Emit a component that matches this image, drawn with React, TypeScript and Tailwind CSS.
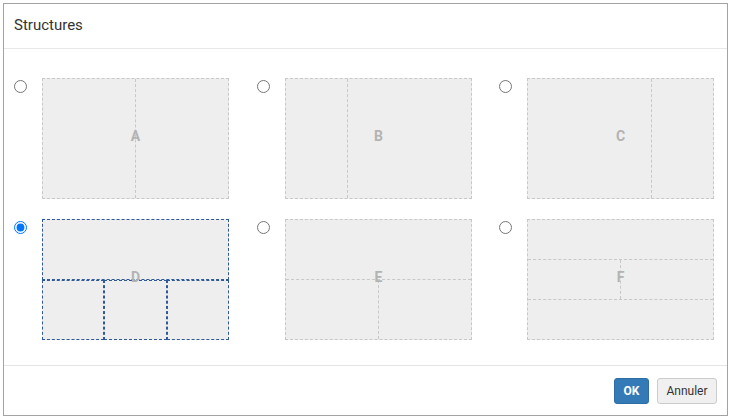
import React from "react";

const cell = "border-[#c8c8c8] border-dashed";
const sel = "border border-dashed border-[#2f5898]";

function Letter({ children }: { children: string }) {
  return (
    <div className="absolute inset-0 flex items-center justify-center pb-[4px] pointer-events-none">
      <span className="text-[14px] font-bold text-[#b3b3b3]">{children}</span>
    </div>
  );
}

function StructA() {
  return (
    <div className={`relative flex w-full h-full border ${cell}`}>
      <div className={`w-1/2 border-r ${cell}`} />
      <div className="flex-1" />
      <Letter>A</Letter>
    </div>
  );
}

function StructB() {
  return (
    <div className={`relative flex w-full h-full border ${cell}`}>
      <div className={`w-[62px] border-r ${cell}`} />
      <div className="flex-1" />
      <Letter>B</Letter>
    </div>
  );
}

function StructC() {
  return (
    <div className={`relative flex w-full h-full border ${cell}`}>
      <div className={`w-[124px] border-r ${cell}`} />
      <div className="flex-1" />
      <Letter>C</Letter>
    </div>
  );
}

function StructD() {
  return (
    <div className="relative flex flex-col w-full h-full">
      <div className={`h-[61px] ${sel}`} />
      <div className="flex flex-1">
        <div className={`w-[62px] ${sel}`} />
        <div className={`w-[63px] ${sel}`} />
        <div className={`flex-1 ${sel}`} />
      </div>
      <Letter>D</Letter>
    </div>
  );
}

function StructE() {
  return (
    <div className={`relative flex flex-col w-full h-full border ${cell}`}>
      <div className={`h-[60px] border-b ${cell}`} />
      <div className="flex flex-1">
        <div className={`w-1/2 border-r ${cell}`} />
        <div className="flex-1" />
      </div>
      <Letter>E</Letter>
    </div>
  );
}

function StructF() {
  return (
    <div className={`relative flex flex-col w-full h-full border ${cell}`}>
      <div className={`h-[40px] border-b ${cell}`} />
      <div className={`flex h-[40px] border-b ${cell}`}>
        <div className={`w-1/2 border-r ${cell}`} />
        <div className="flex-1" />
      </div>
      <div className="flex-1" />
      <Letter>F</Letter>
    </div>
  );
}

const options = [
  { id: "A", El: StructA },
  { id: "B", El: StructB },
  { id: "C", El: StructC },
  { id: "D", El: StructD },
  { id: "E", El: StructE },
  { id: "F", El: StructF },
];

export default function App() {
  const [value, setValue] = React.useState("D");

  return (
    <div className="w-[732px] h-[419px] bg-white pt-[3px] pl-[3px] font-['Roboto',sans-serif] text-[#333]">
      <div className="w-[725px] h-[413px] border border-[#a3a3a3] flex flex-col bg-white">
        <div className="h-[45px] border-b border-[#e8e8e8] pl-[10px] flex items-center">
          <h4 className="text-[15px] leading-none pb-[2px]">Structures</h4>
        </div>

        <div className="h-[316px] pt-[29px] pl-[10px]">
          <div className="grid grid-cols-[243px_242px_215px] gap-y-[20px]">
            {options.map(({ id, El }) => (
              <label key={id} className="flex">
                <div className="w-[28px] pt-[2px]">
                  <input
                    type="radio"
                    name="structure"
                    checked={value === id}
                    onChange={() => setValue(id)}
                    className="block w-[13px] h-[13px] m-0"
                  />
                </div>
                <div className="w-[187px] h-[121px] bg-[#eeeeee]">
                  <El />
                </div>
              </label>
            ))}
          </div>
        </div>

        <div className="flex-1 border-t border-[#e5e5e5] flex justify-end items-start pt-[12px] pr-[10px] gap-[8px]">
          <button className="h-[26px] w-[35px] rounded-[3px] bg-[#337ab7] border border-[#2e6da4] text-white text-[12px] font-bold">
            OK
          </button>
          <button className="h-[26px] w-[60px] rounded-[3px] bg-[#f0f0f0] border border-[#cccccc] text-[#333] text-[12px]">
            Annuler
          </button>
        </div>
      </div>
    </div>
  );
}
